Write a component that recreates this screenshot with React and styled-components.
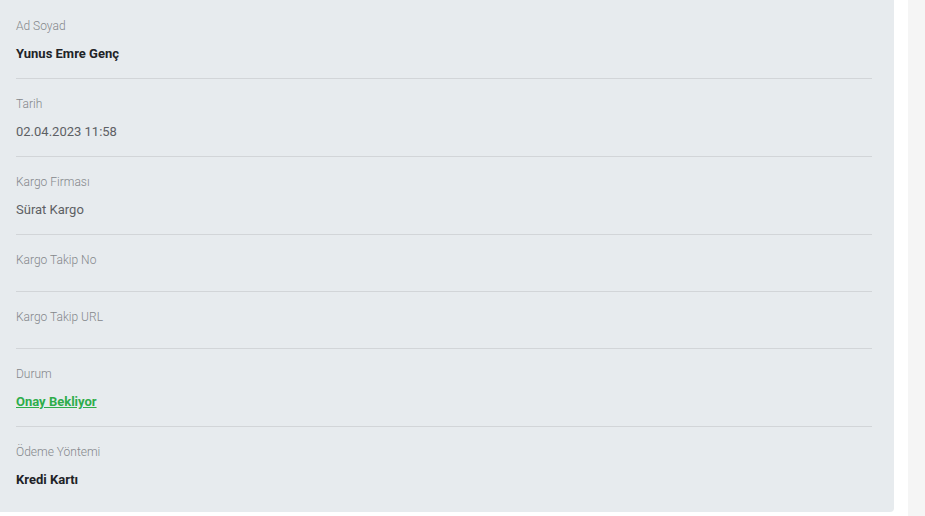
import React from 'react'
import styled, {createGlobalStyle} from 'styled-components'

const GlobalStyle = createGlobalStyle`
  html, body {
    margin: 0;
    padding: 0;
    background: #ffffff;
  }
  body {
    font-family: Roboto, "Liberation Sans", sans-serif;
  }
`

const details = [
  {label: 'Ad Soyad', value: 'Yunus Emre Genç', kind: 'strong'},
  {label: 'Tarih', value: '02.04.2023 11:58', kind: 'plain'},
  {label: 'Kargo Firması', value: 'Sürat Kargo', kind: 'plain'},
  {label: 'Kargo Takip No'},
  {label: 'Kargo Takip URL'},
  {label: 'Durum', value: 'Onay Bekliyor', kind: 'status'},
  {label: 'Ödeme Yöntemi', value: 'Kredi Kartı', kind: 'strong'},
]

function App() {
  return (
    <>
      <GlobalStyle />
      <Page>
        <Panel>
          {details.map((d, i) => (
            <Row key={d.label} last={i === details.length - 1}>
              <Label>{d.label}</Label>
              {d.kind === 'status' && <StatusLink href="#">{d.value}</StatusLink>}
              {d.kind && d.kind !== 'status' && <Value kind={d.kind}>{d.value}</Value>}
            </Row>
          ))}
        </Panel>
        <SideStrip />
      </Page>
    </>
  )
}

export default App

const Page = styled.div`
  display: flex;
  width: 925px;
  height: 516px;
  align-items: flex-start;
`

const Panel = styled.div`
  width: 894px;
  height: 512px;
  box-sizing: border-box;
  background-color: #e7ebee;
  border-radius: 0 0 4px 0;
  padding: 1px 22px 0 16px;
  display: flex;
  flex-direction: column;
`

const SideStrip = styled.div`
  width: 17px;
  height: 516px;
  margin-left: 14px;
  background-color: #f5f5f5;
`

const Row = styled.div`
  display: flex;
  flex-direction: column;
  align-items: flex-start;
  padding: ${props => (props.last ? '14px 0 0' : '14px 0 14px')};
  border-bottom: ${props => (props.last ? 'none' : '1px solid #d2d5d8')};
`

const Label = styled.span`
  font-size: 12px;
  line-height: 22px;
  margin-bottom: 6px;
  color: #84878b;
  font-weight: 300;
`

const Value = styled.span`
  font-size: 13px;
  line-height: 21px;
  color: ${props => (props.kind === 'strong' ? '#212327' : '#5d6064')};
  font-weight: ${props => (props.kind === 'strong' ? 700 : 400)};
`

const StatusLink = styled.a`
  font-size: 13px;
  line-height: 21px;
  font-weight: 700;
  color: #2ead4b;
  text-decoration: underline;
`
